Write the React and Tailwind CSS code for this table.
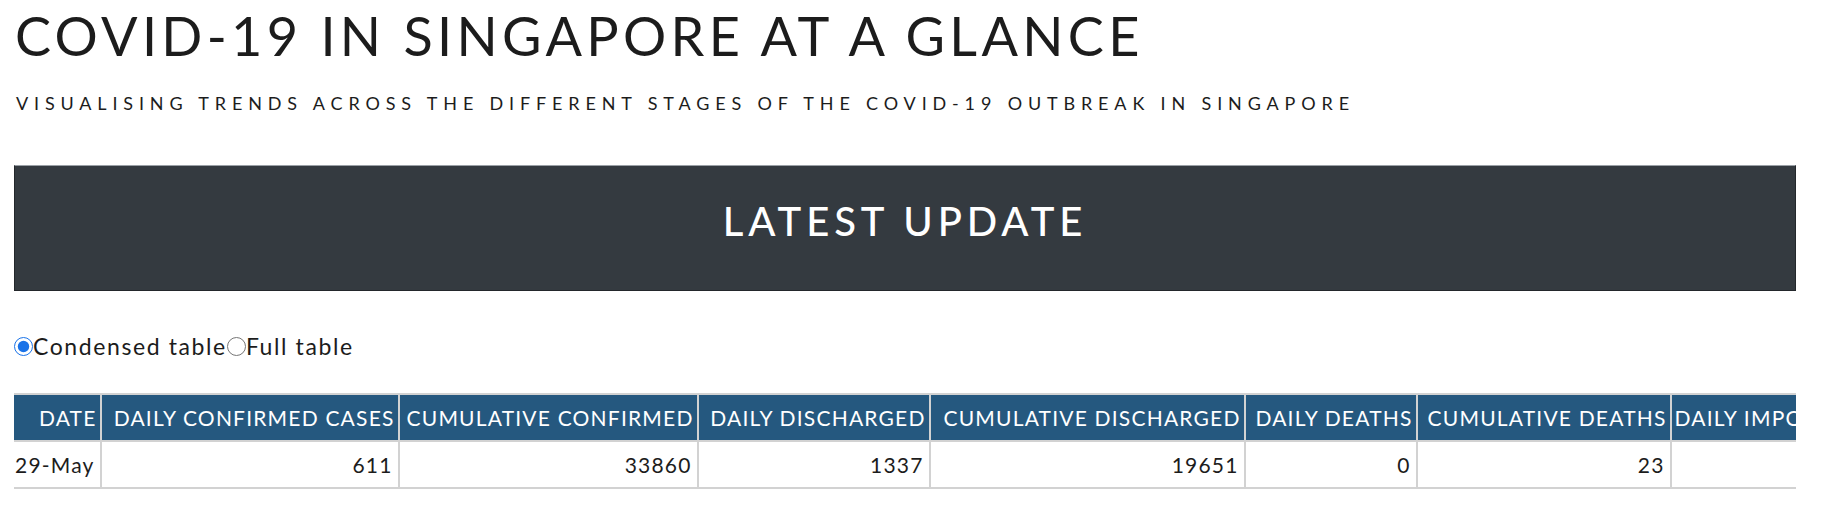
import React, { useState } from 'react';

const columns = [
  { label: 'DATE', w: 91 },
  { label: 'DAILY CONFIRMED CASES', w: 298 },
  { label: 'CUMULATIVE CONFIRMED', w: 299 },
  { label: 'DAILY DISCHARGED', w: 232 },
  { label: 'CUMULATIVE DISCHARGED', w: 315 },
  { label: 'DAILY DEATHS', w: 172 },
  { label: 'CUMULATIVE DEATHS', w: 254 },
  { label: 'DAILY IMPORTED CASES', w: 260 },
  { label: 'DAILY LOCAL CASES', w: 230 },
];

const row = ['29-May', '611', '33860', '1337', '19651', '0', '23', '0', '611'];

const App = () => {
  const [mode, setMode] = useState('condensed');

  return (
    <div className="w-[1838px] h-[518px] overflow-hidden bg-white font-['Lato',sans-serif] text-[#1c1c1c] pl-[14px] pr-[42px]">
      {/* page heading */}
      <h1 className="pt-[4px] text-[54px] leading-[64px] tracking-[4.3px] pl-[1px]">
        COVID-19 IN SINGAPORE AT A GLANCE
      </h1>
      <p className="mt-[24px] text-[18px] leading-[22px] tracking-[5.85px] pl-[2px]">
        VISUALISING TRENDS ACROSS THE DIFFERENT STAGES OF THE COVID-19 OUTBREAK IN SINGAPORE
      </p>

      {/* banner */}
      <div className="mt-[51px] h-[126px] bg-[#343a40] border border-[#23272b] border-t-[#9aa0a6] flex items-center justify-center pb-[14px]">
        <h2 className="text-white text-[40px] tracking-[4.9px] font-medium leading-none">LATEST UPDATE</h2>
      </div>

      {/* table toggle */}
      <div className="mt-[42px] flex items-center text-[23px] leading-[26px] tracking-[1.6px] text-[#1c1c1c]">
        <label className="flex items-center">
          <input
            type="radio"
            name="tbl"
            checked={mode === 'condensed'}
            onChange={() => setMode('condensed')}
            className="w-[19px] h-[19px] m-0 accent-[#1a73e8]"
          />
          Condensed table
        </label>
        <label className="flex items-center">
          <input
            type="radio"
            name="tbl"
            checked={mode === 'full'}
            onChange={() => setMode('full')}
            className="w-[19px] h-[19px] m-0"
          />
          Full table
        </label>
      </div>

      {/* data table, scrolled a touch to the right */}
      <div className="mt-[34px] w-[1782px] overflow-hidden">
        <table className="ml-[-6px] border-collapse text-[21px] tracking-[1.2px]">
          <thead>
            <tr className="bg-[#25587f] text-white">
              {columns.map((c) => (
                <th
                  key={c.label}
                  style={{ width: c.w, minWidth: c.w }}
                  className="h-[47px] px-[3px] text-right font-normal whitespace-nowrap border-2 border-[#d2d2d2]"
                >
                  {c.label}
                </th>
              ))}
            </tr>
          </thead>
          <tbody>
            <tr>
              {row.map((v, i) => (
                <td
                  key={i}
                  className="h-[47px] px-[5px] text-right whitespace-nowrap border-2 border-t-0 border-[#d2d2d2]"
                >
                  {v}
                </td>
              ))}
            </tr>
          </tbody>
        </table>
      </div>
    </div>
  );
};

export default App;
